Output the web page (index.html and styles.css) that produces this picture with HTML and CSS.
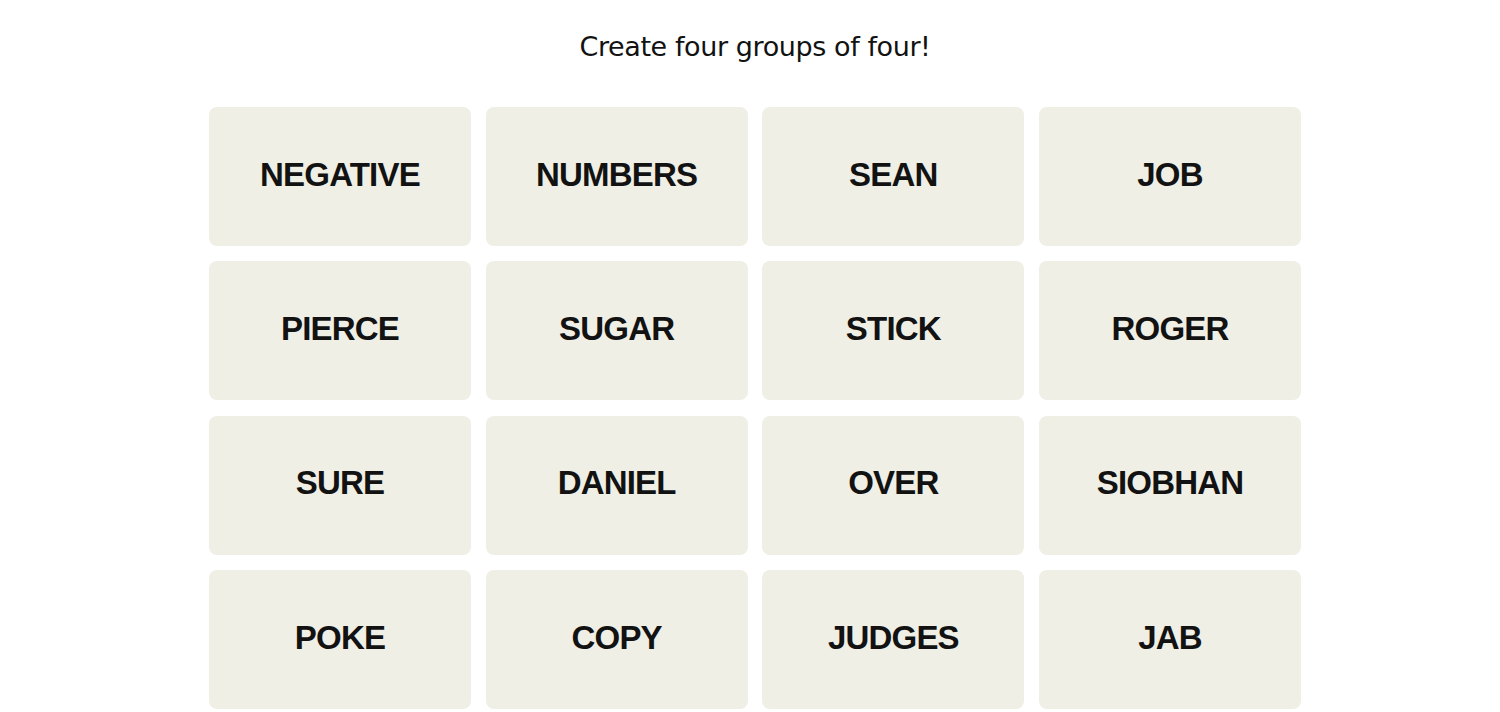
FILE: index.html
```html
<!DOCTYPE html>
<html lang="en">
<head>
    <meta charset="UTF-8">
    <meta name="viewport" content="width=device-width, initial-scale=1.0">
    <title>Connections</title>
    <link rel="stylesheet" href="styles.css">
</head>
<body>
    <main class="game">
        <p class="prompt">Create four groups of four!</p>
        <div class="board">
            <button class="card">NEGATIVE</button>
            <button class="card">NUMBERS</button>
            <button class="card">SEAN</button>
            <button class="card">JOB</button>
            <button class="card">PIERCE</button>
            <button class="card">SUGAR</button>
            <button class="card">STICK</button>
            <button class="card">ROGER</button>
            <button class="card">SURE</button>
            <button class="card">DANIEL</button>
            <button class="card">OVER</button>
            <button class="card">SIOBHAN</button>
            <button class="card">POKE</button>
            <button class="card">COPY</button>
            <button class="card">JUDGES</button>
            <button class="card">JAB</button>
        </div>
    </main>
</body>
</html>
```

FILE: styles.css
```css
/* General Reset */
* {
    box-sizing: border-box;
    margin: 0;
    padding: 0;
}

body {
    background-color: #fff;
    font-family: "Liberation Sans", Arial, sans-serif;
    color: #121212;
}

/* Game wrapper */
.game {
    padding: 30px 0 0 10px;
    display: flex;
    flex-direction: column;
    align-items: center;
}

.prompt {
    font-family: "DejaVu Sans", "Liberation Sans", sans-serif;
    font-size: 27px;
    line-height: 34px;
    font-weight: 400;
    letter-spacing: -0.4px;
    margin-bottom: 43px;
}

/* Board grid */
.board {
    display: grid;
    grid-template-columns: repeat(4, 262px);
    grid-template-rows: repeat(4, 139px);
    column-gap: 14.7px;
    row-gap: 15.4px;
}

.card {
    background-color: #efefe6;
    border: none;
    border-radius: 8px;
    font-family: "Liberation Sans Narrow", "Liberation Sans", Arial, sans-serif;
    font-size: 33px;
    font-weight: 700;
    letter-spacing: -0.8px;
    color: #121212;
    display: flex;
    align-items: center;
    justify-content: center;
    padding-bottom: 4px;
    cursor: pointer;
}
```
